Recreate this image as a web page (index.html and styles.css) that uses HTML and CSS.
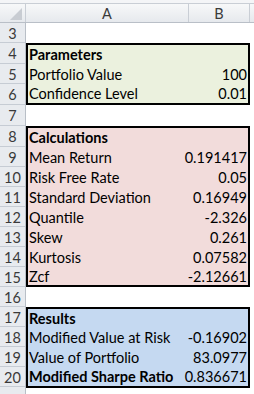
FILE: index.html
```html
<!DOCTYPE html>
<html>
<head>
<meta charset="utf-8">
<link rel="stylesheet" href="styles.css">
</head>
<body>
<div class="topstrip"></div>
<div class="colhead">
  <div class="corner"><svg width="25" height="18" viewBox="0 0 25 18"><polygon points="22,4 22,16 10,16" fill="#c8ccd2"/></svg></div>
  <div class="ch ca">A</div>
  <div class="ch cb">B</div>
  <div class="ch rest"></div>
</div>
<div class="sheet">
  <div class="rownums">
    <div class="rn h20">3</div>
    <div class="rn h21">4</div>
    <div class="rn h20">5</div>
    <div class="rn h21">6</div>
    <div class="rn h21">7</div>
    <div class="rn h21">8</div>
    <div class="rn h20">9</div>
    <div class="rn h20">10</div>
    <div class="rn h20">11</div>
    <div class="rn h20">12</div>
    <div class="rn h20">13</div>
    <div class="rn h20">14</div>
    <div class="rn h20">15</div>
    <div class="rn h20">16</div>
    <div class="rn h20">17</div>
    <div class="rn h20">18</div>
    <div class="rn h20">19</div>
    <div class="rn h20">20</div>
    <div class="rn h20"></div>
  </div>
  <div class="cells">
    <div class="blank b20"></div>
    <section class="box green">
      <div class="row r19"><span class="lbl bold">Parameters</span><span class="val"></span></div>
      <div class="row r20"><span class="lbl">Portfolio Value</span><span class="val">100</span></div>
      <div class="row r19"><span class="lbl">Confidence Level</span><span class="val">0.01</span></div>
    </section>
    <div class="blank b21"></div>
    <section class="box pink">
      <div class="row r19"><span class="lbl bold">Calculations</span><span class="val"></span></div>
      <div class="row r20"><span class="lbl">Mean Return</span><span class="val">0.191417</span></div>
      <div class="row r20"><span class="lbl">Risk Free Rate</span><span class="val">0.05</span></div>
      <div class="row r20"><span class="lbl">Standard Deviation</span><span class="val">0.16949</span></div>
      <div class="row r20"><span class="lbl">Quantile</span><span class="val">-2.326</span></div>
      <div class="row r20"><span class="lbl">Skew</span><span class="val">0.261</span></div>
      <div class="row r20"><span class="lbl">Kurtosis</span><span class="val">0.07582</span></div>
      <div class="row r18"><span class="lbl">Zcf</span><span class="val">-2.12661</span></div>
    </section>
    <div class="blank b20"></div>
    <section class="box blue">
      <div class="row r18"><span class="lbl bold">Results</span><span class="val"></span></div>
      <div class="row r20"><span class="lbl">Modified Value at Risk</span><span class="val">-0.16902</span></div>
      <div class="row r20"><span class="lbl">Value of Portfolio</span><span class="val">83.0977</span></div>
      <div class="row r19"><span class="lbl bold">Modified Sharpe Ratio</span><span class="val">0.836671</span></div>
    </section>
  </div>
</div>
</body>
</html>
```
FILE: styles.css
```css
html, body {
  margin: 0;
  padding: 0;
  background: #ffffff;
}
body {
  width: 254px;
  height: 394px;
  overflow: hidden;
  font-family: Lato, "Open Sans", sans-serif;
  font-size: 14.5px;
  color: #000;
}
.topstrip {
  height: 3px;
  background: #f4f5f7;
  border-bottom: 1px solid #c9ced5;
}
.colhead {
  display: flex;
  height: 18px;
  border-bottom: 1px solid #b9bfc7;
  background: linear-gradient(#f7f8f9, #e6e9ed);
}
.corner {
  width: 25px;
  border-right: 1px solid #c9ced5;
  display: flex;
}
.ch {
  display: flex;
  align-items: center;
  justify-content: center;
  color: #3a3a3a;
  font-size: 14.5px;
  border-right: 1px solid #c9ced5;
}
.ca { width: 162px; }
.cb { width: 60px; }
.rest { flex: 1; border-right: none; }

.sheet {
  display: flex;
}
.rownums {
  width: 25px;
  border-right: 1px solid #b9bfc7;
  background: #e8ebef;
  display: flex;
  flex-direction: column;
}
.rn {
  box-sizing: border-box;
  border-bottom: 1px solid #c6ccd4;
  display: flex;
  align-items: center;
  justify-content: center;
  color: #3a3a3a;
  font-size: 14.5px;
  padding-top: 1px;
}
.rn.h20 { height: 20px; }
.rn.h21 { height: 21px; }

.cells {
  width: 228px;
  display: flex;
  flex-direction: column;
}
.blank.b20 { height: 20px; }
.blank.b21 { height: 21px; }
.box {
  width: 224px;
  box-sizing: border-box;
  border: 2px solid #000;
  display: flex;
  flex-direction: column;
}
.green { background: #ebf1de; }
.pink { background: #f2dcdb; }
.blue { background: #c5d9f1; }
.row {
  box-sizing: border-box;
  display: flex;
  justify-content: space-between;
  align-items: center;
  padding: 1px 1px 0 1px;
  line-height: 16px;
}
.row.r18 { height: 18px; }
.row.r19 { height: 19px; }
.row.r20 { height: 20px; }
.bold { font-weight: 700; }
```
